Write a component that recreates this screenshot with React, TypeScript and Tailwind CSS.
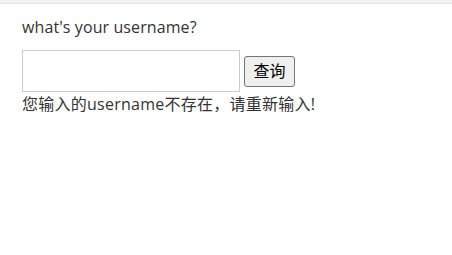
import React from "react";

export default function App() {
  return (
    <div className="w-[452px] h-[255px] bg-white text-[#333] text-[16px]" style={{ fontFamily: '"Open Sans", "Noto Sans CJK SC", sans-serif' }}>
      <div className="h-[4px] bg-[#f2f2f2] border-b border-[#e3e3e3]" />
      <div className="pl-[22px]">
        <p className="mt-[12px] leading-[22px] tracking-[0.1px]">what's your username?</p>
        <div className="mt-[12px] flex items-center gap-[4px]">
          <input className="w-[218px] h-[42px] border border-[#cccccc] outline-none px-2" />
          <button className="h-[31px] w-[51px] bg-[#efefef] border border-[#767676] rounded-[3px] text-[16px] text-black leading-none">查询</button>
        </div>
        <p className="leading-[22px] mt-[1px] tracking-[0.25px]">您输入的username不存在，请重新输入!</p>
      </div>
    </div>
  );
}
